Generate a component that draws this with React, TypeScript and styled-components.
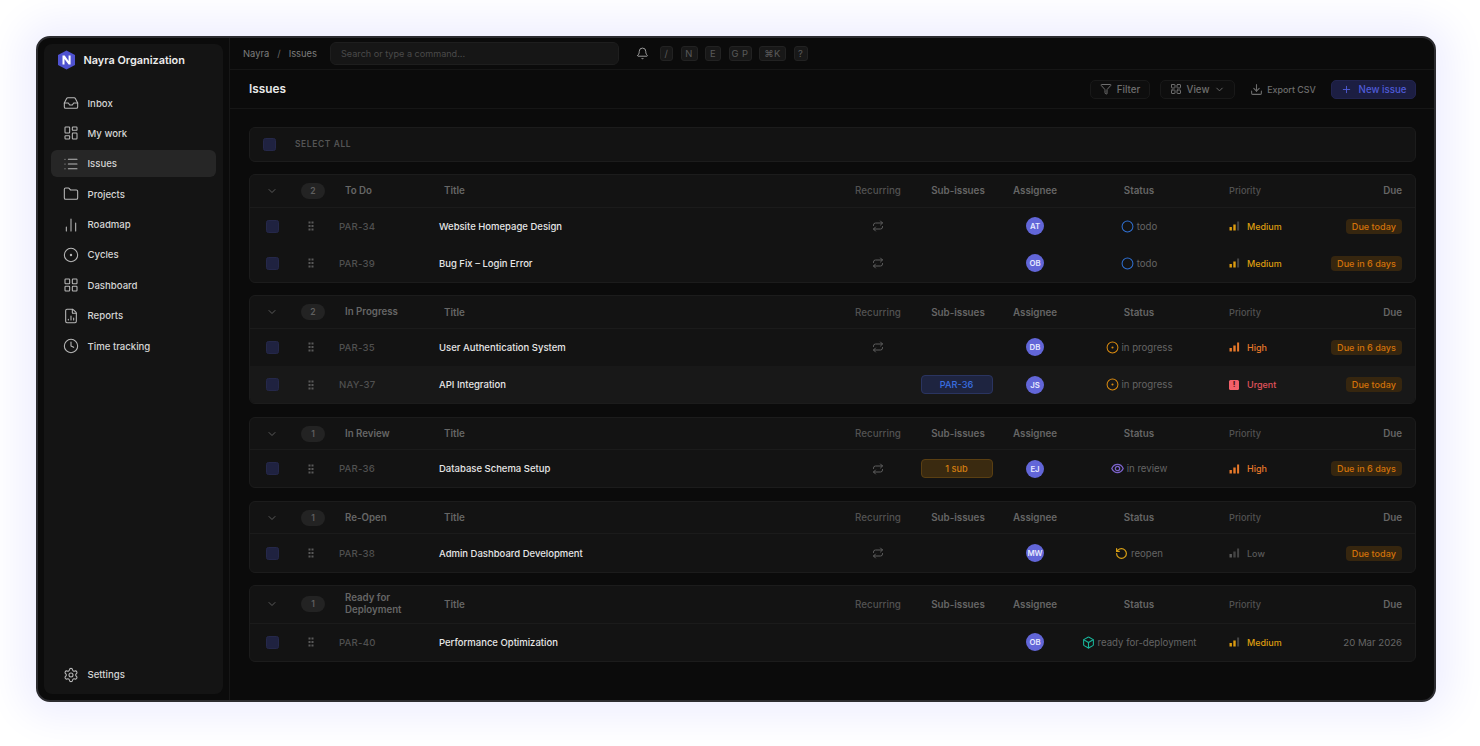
import React from "react";
import styled, { createGlobalStyle } from "styled-components";
import {
  Bell, Box, ChartNoAxesColumn, ChevronDown, Circle, CircleDot, Clock, Download, FileChartColumn,
  Folder, Funnel, Inbox, LayoutDashboard, LayoutGrid, List, Plus, Repeat, RotateCcw, Settings,
} from "lucide-react";

const Global = createGlobalStyle`
  html, body { margin: 0; padding: 0; height: 100%; background: #fff; }
  body { font-family: Inter, "Liberation Sans", sans-serif; }
  #root { height: 100%; }
  * { box-sizing: border-box; }
`;

const Page = styled.div`
  width: 1480px;
  height: 746px;
  padding: 36px 44px 44px 36px;
  overflow: hidden;
  background: #fff;
`;
const Frame = styled.div`
  width: 1400px;
  height: 666px;
  display: flex;
  border: 2px solid #2c2c30;
  border-radius: 14px;
  background: #0b0b0b;
  overflow: hidden;
  box-shadow: 0 0 40px 14px #eeeeff;
`;
const Side = styled.aside`
  width: 192px;
  flex: none;
  padding: 6px;
  border-right: 1px solid #171717;
`;
const SideCard = styled.div`
  height: 100%;
  width: 179px;
  background: #141414;
  border-radius: 8px;
  display: flex;
  flex-direction: column;
  padding: 0 7px 6px;
`;
const Brand = styled.div`
  display: flex;
  align-items: center;
  gap: 7.5px;
  height: 32px;
  padding: 0 0 0 6px;
  margin-bottom: 13.5px;
  color: #ececec;
  font-size: 10.9px;
  font-weight: 600;
`;
const Nav = styled.nav`
  display: flex;
  flex-direction: column;
  gap: 3.4px;
`;
const NavItem = styled.div<{ $active?: boolean }>`
  display: flex;
  align-items: center;
  height: 27px;
  padding-left: 12px;
  gap: 8.5px;
  border-radius: 6px;
  font-size: 9.6px;
  font-weight: 500;
  color: #d4d4d4;
  background: ${(p) => (p.$active ? "#262626" : "transparent")};
  svg { color: #b8b8b8; flex: none; }
`;
const Spacer = styled.div`
  flex: 1;
`;
const Main = styled.main`
  flex: 1;
  min-width: 0;
  display: flex;
  flex-direction: column;
`;
const TopBar = styled.div`
  height: 32px;
  flex: none;
  display: flex;
  align-items: center;
  padding-left: 13px;
  border-bottom: 1px solid #161616;
  color: #8a8a8a;
  font-size: 9.4px;
`;
const Crumb = styled.span`
  color: #7d7d7d;
`;
const CrumbSep = styled.span`
  color: #6a6a6a;
  margin: 0 8px;
`;
const Search = styled.div`
  width: 289px;
  height: 23px;
  margin-left: 13px;
  display: flex;
  align-items: center;
  padding-left: 10px;
  border-radius: 6px;
  background: #161616;
  border: 1px solid #1e1e1e;
  color: #4a4a4a;
  font-size: 9.1px;
`;
const BellWrap = styled.span`
  display: flex;
  margin: 0 11px 0 17px;
  color: #a8a8a8;
`;
const Keys = styled.div`
  display: flex;
  gap: 7.5px;
`;
const Key = styled.span<{ $w: number }>`
  width: ${(p) => p.$w}px;
  height: 15px;
  display: flex;
  align-items: center;
  justify-content: center;
  border-radius: 3px;
  background: #181818;
  border: 1px solid #222;
  color: #5a5a5a;
  font-size: 9.4px;
  letter-spacing: 0.5px;
`;
const Head = styled.div`
  height: 39px;
  flex: none;
  display: flex;
  align-items: center;
  padding: 0 18px 0 19px;
  border-bottom: 1px solid #161616;
`;
const H1 = styled.h1`
  margin: 0;
  flex: 1;
  font-size: 11.8px;
  font-weight: 600;
  color: #e8e8e8;
`;
const Btn = styled.div<{ $w: number }>`
  width: ${(p) => p.$w}px;
  height: 19px;
  display: flex;
  align-items: center;
  justify-content: center;
  gap: 5px;
  border: 1px solid #191919;
  border-radius: 5px;
  background: #0e0e0e;
  color: #6e6e6e;
  font-size: 9.7px;
  font-weight: 500;
  margin-right: 10px;
`;
const GhostBtn = styled(Btn)`
  border: none;
  background: transparent;
  gap: 4px;
  font-size: 8.9px;
  margin: 0 15px 0 5px;
`;
const PrimaryBtn = styled(Btn)`
  border-color: #22244f;
  background: #1c1e42;
  color: #4f5bd8;
  margin: 0;
  gap: 7px;
`;
const Content = styled.div`
  flex: 1;
  padding: 18px 18px 0 19px;
  display: flex;
  flex-direction: column;
  gap: 12.5px;
`;
const SelectBar = styled.div`
  height: 34.5px;
  display: flex;
  align-items: center;
  padding-left: 13px;
  border: 1px solid #1c1c1c;
  border-radius: 6px;
  background: #131313;
  gap: 19px;
  color: #555;
  font-size: 8.4px;
  font-weight: 600;
  letter-spacing: 0.65px;
`;
const Check = styled.span`
  width: 13px;
  height: 13px;
  display: block;
  border-radius: 2.5px;
  background: #1f2240;
  border: 1px solid #25284a;
`;
const Group = styled.section`
  border: 1px solid #1c1c1c;
  border-radius: 6px;
  background: #131313;
  overflow: hidden;
`;
const cols = "44px 45px 100px 1fr 76px 84px 70px 138px 92px 115px";
const HeadRow = styled.div<{ $tall?: boolean }>`
  display: grid;
  grid-template-columns: ${cols};
  align-items: center;
  height: ${(p) => (p.$tall ? 37.5 : 32.5)}px;
  border-bottom: 1px solid #1b1b1b;
  color: #666;
  font-size: 9.8px;
  font-weight: 600;
`;
const Cell = styled.div<{ $align?: string }>`
  display: flex;
  align-items: center;
  justify-content: ${(p) => p.$align || "flex-start"};
  min-width: 0;
`;
const DimCell = styled(Cell)`
  color: #525252;
  font-weight: 500;
`;
const CountCell = styled(Cell)`
  padding-left: 7px;
`;
const Count = styled.span`
  width: 24px;
  height: 16px;
  display: flex;
  align-items: center;
  justify-content: center;
  border-radius: 8px;
  background: #232323;
  color: #5f5f5f;
  font-size: 8.6px;
`;
const GroupName = styled.div`
  padding-left: 6px;
  line-height: 12px;
  padding-right: 10px;
  font-size: 9.7px;
`;
const TitleHead = styled(Cell)`
  padding-left: 5px;
`;
const PriorityHead = styled(DimCell)`
  padding-left: 21px;
  font-size: 9.2px;
`;
const DueHead = styled(Cell)`
  justify-content: flex-end;
  padding-right: 13px;
`;
const Row = styled.div<{ $alt?: boolean }>`
  display: grid;
  grid-template-columns: ${cols};
  align-items: center;
  height: 37.2px;
  background: ${(p) => (p.$alt ? "#181818" : "transparent")};
`;
const Drag = styled(Cell)`
  padding-right: 11px;
  justify-content: center;
`;
const Id = styled.div`
  color: #505050;
  font-size: 9.6px;
  font-weight: 500;
  letter-spacing: 0.2px;
`;
const Title = styled.div`
  color: #e6e6e6;
  font-size: 9.5px;
  font-weight: 500;
`;
const Sub = styled.span<{ $kind: "blue" | "amber" }>`
  width: 72px;
  height: 19px;
  margin-right: 3px;
  display: flex;
  align-items: center;
  justify-content: center;
  border-radius: 4px;
  font-size: 9.2px;
  font-weight: 500;
  background: ${(p) => (p.$kind === "blue" ? "#1e2440" : "#3a2a10")};
  border: 1px solid ${(p) => (p.$kind === "blue" ? "#2a3460" : "#5a3f12")};
  color: ${(p) => (p.$kind === "blue" ? "#3a6fe0" : "#d47f10")};
`;
const Avatar = styled.span`
  width: 18px;
  height: 18px;
  display: flex;
  align-items: center;
  justify-content: center;
  border-radius: 50%;
  background: #6266d8;
  color: #e8eaff;
  font-size: 7.8px;
  font-weight: 600;
`;
const Status = styled.div`
  display: flex;
  align-items: center;
  gap: 3px;
  color: #646464;
  font-size: 9.65px;
`;
const PriorityCell = styled.div<{ $c: string }>`
  display: flex;
  align-items: center;
  gap: 7px;
  padding-left: 21px;
  color: ${(p) => p.$c};
  font-size: 9px;
  font-weight: 500;
`;
const Urgent = styled.span`
  width: 10px;
  height: 10px;
  margin-right: 1px;
  display: flex;
  align-items: center;
  justify-content: center;
  border-radius: 1.5px;
  background: #f2606a;
  color: #4b1016;
  font-size: 7.5px;
  font-weight: 800;
`;
const DueCell = styled.div`
  display: flex;
  justify-content: flex-end;
  padding-right: 13px;
`;
const DueTag = styled.span`
  height: 15px;
  display: flex;
  align-items: center;
  padding: 0 6px;
  border-radius: 4px;
  background: #36260f;
  color: #d2720a;
  font-size: 9.1px;
  font-weight: 500;
`;
const DueDate = styled.span`
  color: #666;
  font-size: 9.6px;
`;

const Logo = () => (
  <svg width="19" height="20" viewBox="0 0 19 20">
    <path d="M9.5 .5 18 5v10l-8.5 4.5L1 15V5z" fill="#4f52d0" />
    <path d="M5.500 14.500v-9h2.200l3.900 5.400V5.500h2v9h-2L7.500 9v5.500z" fill="#fff" />
  </svg>
);
const Grip = () => (
  <svg width="6" height="10" viewBox="0 0 6 10" fill="#585858">
    <rect x="0.500" y="0.500" width="2" height="2" />
    <rect x="3.500" y="0.500" width="2" height="2" />
    <rect x="0.500" y="4" width="2" height="2" />
    <rect x="3.500" y="4" width="2" height="2" />
    <rect x="0.500" y="7.500" width="2" height="2" />
    <rect x="3.500" y="7.500" width="2" height="2" />
  </svg>
);
const Bars = ({ c, level }: { c: string; level: number }) => (
  <svg width="11" height="10" viewBox="0 0 11 10">
    <rect x="0.500" y="6" width="2.400" height="3.500" fill={level >= 1 ? c : "#444"} />
    <rect x="4.300" y="3.500" width="2.400" height="6" fill={level >= 2 ? c : "#444"} />
    <rect x="8.100" y="0.500" width="2" height="9" fill={level >= 3 ? c : "#444"} />
  </svg>
);
const InReview = () => (
  <svg width="13" height="13" viewBox="0 0 24 24" fill="none" stroke="#7b62c9" strokeWidth="2.400">
    <path d="M1.500 12C4 6.500 8 4.500 12 4.500S20 6.500 22.500 12C20 17.500 16 19.500 12 19.500S4 17.500 1.500 12z" />
    <circle cx="12" cy="12" r="4" />
  </svg>
);

const nav: [string, React.ComponentType<any>][] = [
  ["Inbox", Inbox],
  ["My work", LayoutDashboard],
  ["Issues", List],
  ["Projects", Folder],
  ["Roadmap", ChartNoAxesColumn],
  ["Cycles", CircleDot],
  ["Dashboard", LayoutGrid],
  ["Reports", FileChartColumn],
  ["Time tracking", Clock],
];

type St = "todo" | "progress" | "review" | "reopen" | "ready";
type Pr = "Medium" | "High" | "Urgent" | "Low";
type Issue = { id: string; title: string; rec?: boolean; sub?: [string, "blue" | "amber"]; who: string; st: St; pr: Pr; due: string; alt?: boolean };

const stMap: Record<St, { label: string; icon: React.ReactNode }> = {
  todo: { label: "todo", icon: <Circle size={13} color="#2f6fd0" strokeWidth={1.9} /> },
  progress: { label: "in progress", icon: <CircleDot size={13} color="#d98a10" strokeWidth={1.9} /> },
  review: { label: "in review", icon: <InReview /> },
  reopen: { label: "reopen", icon: <RotateCcw size={13} color="#d9a015" strokeWidth={2.2} /> },
  ready: { label: "ready for-deployment", icon: <Box size={13} color="#19b49a" strokeWidth={2} /> },
};
const prMap: Record<Pr, { c: string; level: number }> = {
  Medium: { c: "#dc9c10", level: 2 },
  High: { c: "#e8792a", level: 3 },
  Urgent: { c: "#e0525c", level: 3 },
  Low: { c: "#5a5a5a", level: 1 },
};

const groups: { name: string; count: number; tall?: boolean; items: Issue[] }[] = [
  { name: "To Do", count: 2, items: [
    { id: "PAR-34", title: "Website Homepage Design", rec: true, who: "AT", st: "todo", pr: "Medium", due: "Due today" },
    { id: "PAR-39", title: "Bug Fix – Login Error", rec: true, who: "OB", st: "todo", pr: "Medium", due: "Due in 6 days" },
  ]},
  { name: "In Progress", count: 2, items: [
    { id: "PAR-35", title: "User Authentication System", rec: true, who: "DB", st: "progress", pr: "High", due: "Due in 6 days" },
    { id: "NAY-37", title: "API Integration", sub: ["PAR-36", "blue"], who: "JS", st: "progress", pr: "Urgent", due: "Due today", alt: true },
  ]},
  { name: "In Review", count: 1, items: [
    { id: "PAR-36", title: "Database Schema Setup", rec: true, sub: ["1 sub", "amber"], who: "EJ", st: "review", pr: "High", due: "Due in 6 days" },
  ]},
  { name: "Re-Open", count: 1, items: [
    { id: "PAR-38", title: "Admin Dashboard Development", rec: true, who: "MW", st: "reopen", pr: "Low", due: "Due today" },
  ]},
  { name: "Ready for Deployment", count: 1, tall: true, items: [
    { id: "PAR-40", title: "Performance Optimization", who: "OB", st: "ready", pr: "Medium", due: "20 Mar 2026" },
  ]},
];

const IssueRow = ({ it }: { it: Issue }) => (
  <Row $alt={it.alt}>
    <Cell $align="center"><Check /></Cell>
    <Drag><Grip /></Drag>
    <Id>{it.id}</Id>
    <Title>{it.title}</Title>
    <Cell $align="center">{it.rec && <Repeat size={12} color="#5e5e5e" />}</Cell>
    <Cell $align="center">{it.sub && <Sub $kind={it.sub[1]}>{it.sub[0]}</Sub>}</Cell>
    <Cell $align="center"><Avatar>{it.who}</Avatar></Cell>
    <Cell $align="center"><Status>{stMap[it.st].icon}{stMap[it.st].label}</Status></Cell>
    <PriorityCell $c={prMap[it.pr].c}>
      {it.pr === "Urgent" ? <Urgent>!</Urgent> : <Bars c={prMap[it.pr].c} level={prMap[it.pr].level} />}
      {it.pr}
    </PriorityCell>
    <DueCell>{it.due.startsWith("Due") ? <DueTag>{it.due}</DueTag> : <DueDate>{it.due}</DueDate>}</DueCell>
  </Row>
);

export default function App() {
  return (
    <Page>
      <Global />
      <Frame>
        <Side>
          <SideCard>
            <Brand><Logo />Nayra Organization</Brand>
            <Nav>
              {nav.map(([label, Icon]) => (
                <NavItem key={label} $active={label === "Issues"}>
                  <Icon size={16} strokeWidth={1.6} />
                  {label}
                </NavItem>
              ))}
            </Nav>
            <Spacer />
            <NavItem><Settings size={16} strokeWidth={1.6} />Settings</NavItem>
          </SideCard>
        </Side>
        <Main>
          <TopBar>
            <Crumb>Nayra</Crumb><CrumbSep>/</CrumbSep><Crumb>Issues</Crumb>
            <Search>Search or type a command...</Search>
            <BellWrap><Bell size={13} strokeWidth={1.7} /></BellWrap>
            <Keys>
              <Key $w={13}>/</Key><Key $w={17}>N</Key><Key $w={16}>E</Key><Key $w={23}>G P</Key><Key $w={27}>⌘K</Key><Key $w={14}>?</Key>
            </Keys>
          </TopBar>
          <Head>
            <H1>Issues</H1>
            <Btn $w={60}><Funnel size={12} />Filter</Btn>
            <Btn $w={75}><LayoutGrid size={12} />View<ChevronDown size={11} /></Btn>
            <GhostBtn $w={66}><Download size={13} />Export CSV</GhostBtn>
            <PrimaryBtn $w={85}><Plus size={11} />New issue</PrimaryBtn>
          </Head>
          <Content>
            <SelectBar><Check />SELECT ALL</SelectBar>
            {groups.map((g) => (
              <Group key={g.name}>
                <HeadRow $tall={g.tall}>
                  <Cell $align="center"><ChevronDown size={12} color="#5a5a5a" /></Cell>
                  <CountCell><Count>{g.count}</Count></CountCell>
                  <GroupName>{g.name}</GroupName>
                  <TitleHead>Title</TitleHead>
                  <DimCell $align="center">Recurring</DimCell>
                  <Cell $align="center">Sub-issues</Cell>
                  <Cell $align="center">Assignee</Cell>
                  <Cell $align="center">Status</Cell>
                  <PriorityHead>Priority</PriorityHead>
                  <DueHead>Due</DueHead>
                </HeadRow>
                {g.items.map((it) => <IssueRow key={it.id} it={it} />)}
              </Group>
            ))}
          </Content>
        </Main>
      </Frame>
    </Page>
  );
}
